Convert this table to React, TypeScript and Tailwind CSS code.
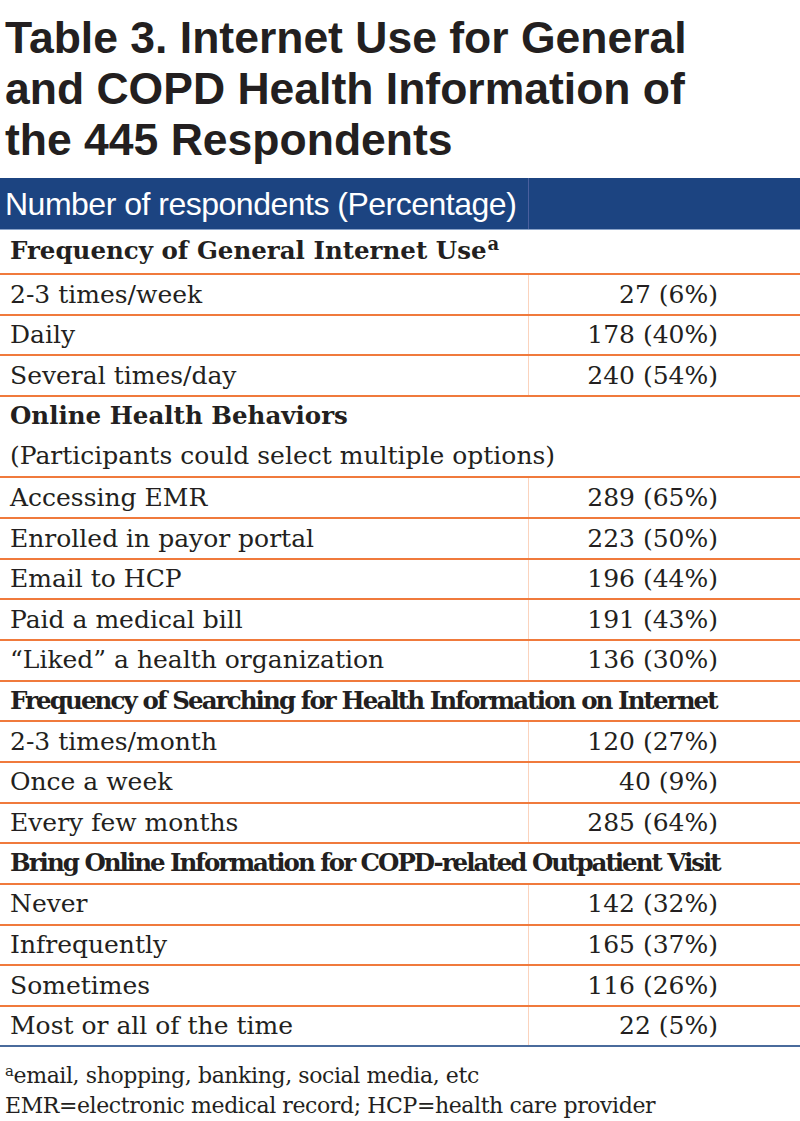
import React from "react";

type Row =
  | { kind: "section"; text: React.ReactNode; track?: string; noTop?: boolean }
  | { kind: "note"; text: string; noTop?: boolean }
  | { kind: "data"; label: string; value: string };

const rows: Row[] = [
  {
    kind: "section",
    text: (
      <>
        Frequency of General Internet Use
        <span className="text-[18px] relative -top-[9px] ml-[1px]">a</span>
      </>
    ),
    noTop: true,
  },
  { kind: "data", label: "2-3 times/week", value: "27 (6%)" },
  { kind: "data", label: "Daily", value: "178 (40%)" },
  { kind: "data", label: "Several times/day", value: "240 (54%)" },
  { kind: "section", text: "Online Health Behaviors" },
  { kind: "note", text: "(Participants could select multiple options)", noTop: true },
  { kind: "data", label: "Accessing EMR", value: "289 (65%)" },
  { kind: "data", label: "Enrolled in payor portal", value: "223 (50%)" },
  { kind: "data", label: "Email to HCP", value: "196 (44%)" },
  { kind: "data", label: "Paid a medical bill", value: "191 (43%)" },
  { kind: "data", label: "\u201CLiked\u201D a health organization", value: "136 (30%)" },
  { kind: "section", text: "Frequency of Searching for Health Information on Internet", track: "tracking-[-1.9px]" },
  { kind: "data", label: "2-3 times/month", value: "120 (27%)" },
  { kind: "data", label: "Once a week", value: "40 (9%)" },
  { kind: "data", label: "Every few months", value: "285 (64%)" },
  { kind: "section", text: "Bring Online Information for COPD-related Outpatient Visit", track: "tracking-[-2px]" },
  { kind: "data", label: "Never", value: "142 (32%)" },
  { kind: "data", label: "Infrequently", value: "165 (37%)" },
  { kind: "data", label: "Sometimes", value: "116 (26%)" },
  { kind: "data", label: "Most or all of the time", value: "22 (5%)" },
];

const serif = "font-['DejaVu_Serif',serif]";

export default function App() {
  return (
    <div className="w-[800px] h-[1121px] bg-white text-[#231f20] overflow-hidden">
      <h1 className="font-['Liberation_Sans',Arial,sans-serif] font-bold text-[44.5px] leading-[51px] pl-[5px] pt-[12px] whitespace-nowrap">
        Table 3. Internet Use for General
        <br />
        and COPD Health Information of
        <br />
        the 445 Respondents
      </h1>
      <div className="mt-[13px] h-[52px] flex bg-[#1c4481] border-b border-[#8aa3c8]">
        <div className="w-[529px] border-r border-[#4a5f9e] flex items-center pl-[5px]">
          <span className="font-['Liberation_Sans',Arial,sans-serif] text-[32px] tracking-[-0.5px] text-white whitespace-nowrap">
            Number of respondents (Percentage)
          </span>
        </div>
        <div className="flex-1" />
      </div>
      <div className={serif}>
        {rows.map((r, i) => {
          const top = "noTop" in r && r.noTop ? "" : "border-t-2 border-[#f07a3c]";
          if (r.kind === "section") {
            return (
              <div
                key={i}
                className={`${i === 0 ? "h-[43px]" : "h-[40.67px]"} box-border ${top} flex items-center pl-[10px] font-bold text-[24.5px] whitespace-nowrap ${r.track ?? ""}`}
              >
                <span>{r.text}</span>
              </div>
            );
          }
          if (r.kind === "note") {
            return (
              <div key={i} className={`h-[40.67px] box-border ${top} flex items-center pl-[10px] text-[25px] whitespace-nowrap`}>
                {r.text}
              </div>
            );
          }
          return (
            <div key={i} className={`h-[40.67px] box-border ${top} flex text-[25px] whitespace-nowrap`}>
              <div className="w-[529px] border-r border-[#fbd3bd] flex items-center pl-[10px]">{r.label}</div>
              <div className="flex-1 flex items-center justify-end pr-[82px]">{r.value}</div>
            </div>
          );
        })}
        <div className="border-t-2 border-[#4a6b9c]" />
        <div className="pt-[15px] pl-[5px] text-[22px] leading-[28px] tracking-[-0.4px] whitespace-nowrap">
          <div>
            <span className="text-[15px] relative -top-[7px]">a</span>email, shopping, banking, social media, etc
          </div>
          <div>EMR=electronic medical record; HCP=health care provider</div>
        </div>
      </div>
    </div>
  );
}
